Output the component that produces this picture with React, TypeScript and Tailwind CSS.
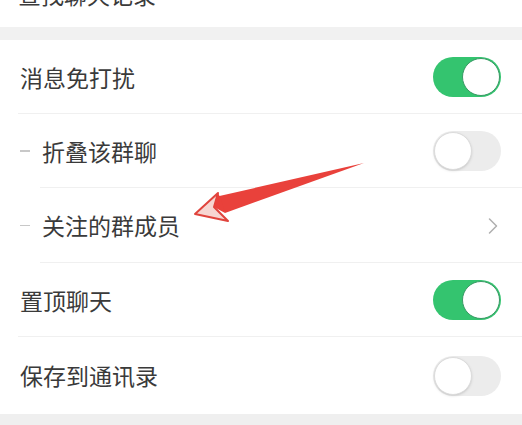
import { ChevronRight } from 'lucide-react';

const font = { fontFamily: '"Noto Sans CJK SC", "Noto Sans", sans-serif' };

function Toggle({ on }: { on: boolean }) {
    return on ? (
        <div className="w-[68px] h-[40px] rounded-full bg-[#34c46f] flex items-center justify-end pr-[1px]">
            <div className="w-[38px] h-[38px] rounded-full bg-white border-[1.5px] border-[#3a9a66]" />
        </div>
    ) : (
        <div className="w-[68px] h-[40px] rounded-full bg-[#ececec] flex items-center pl-[1px]">
            <div className="w-[38px] h-[38px] rounded-full bg-white border border-[#dcdcdc] shadow-sm" />
        </div>
    );
}

interface RowProps {
    label: string;
    sub?: boolean;
    right: React.ReactNode;
    divider?: 'full' | 'inset' | 'none';
    height?: string;
}

function Row({ label, sub, right, divider = 'full', height = 'h-[74px]' }: RowProps) {
    return (
        <div className={`relative flex items-center ${height} pl-[20px] pr-[21px] bg-white`}>
            {sub && <span className="w-[10px] h-[1.5px] bg-[#c8c8c8] mr-[12px]" />}
            <span className="flex-1 text-[23px] leading-none text-[#3a3a3a]">{label}</span>
            {right}
            {divider === 'full' && <div className="absolute bottom-0 left-[18px] right-0 h-px bg-[#f0f0f0]" />}
            {divider === 'inset' && <div className="absolute bottom-0 left-[40px] right-0 h-px bg-[#f0f0f0]" />}
        </div>
    );
}

export default function App() {
    return (
        <div className="relative w-[522px] h-[425px] overflow-hidden bg-[#efefef]" style={font}>
            {/* cut-off section above */}
            <div className="h-[27px] overflow-hidden bg-white pl-[18px]">
                <div className="-mt-[17px] text-[23px] leading-[23px] text-[#3a3a3a]">查找聊天记录</div>
            </div>
            <div className="h-[13px] bg-[#f1f1f1]" />

            <Row label="消息免打扰" right={<Toggle on />} />
            <Row label="折叠该群聊" sub right={<Toggle on={false} />} divider="inset" />
            <Row
                label="关注的群成员"
                sub
                height="h-[75px]"
                right={<ChevronRight size={28} strokeWidth={1.3} className="text-[#b0b0b0] -mr-[6px]" />}
                divider="inset"
            />
            <Row label="置顶聊天" right={<Toggle on />} />
            <Row label="保存到通讯录" right={<Toggle on={false} />} divider="none" height="h-[77px]" />

            {/* red annotation arrow */}
            <svg className="absolute inset-0 pointer-events-none" width="522" height="425" viewBox="0 0 522 425">
                <polygon points="364,163 215,197 225,213" fill="#e9413b" />
                <polygon
                    points="195,214 218,193 214,207 228,221"
                    fill="#f7d6d2"
                    stroke="#e0443d"
                    strokeWidth="2"
                    strokeLinejoin="round"
                />
                <polygon points="218,193 214,207 225,213 221,199" fill="#e9413b" />
            </svg>
        </div>
    );
}
